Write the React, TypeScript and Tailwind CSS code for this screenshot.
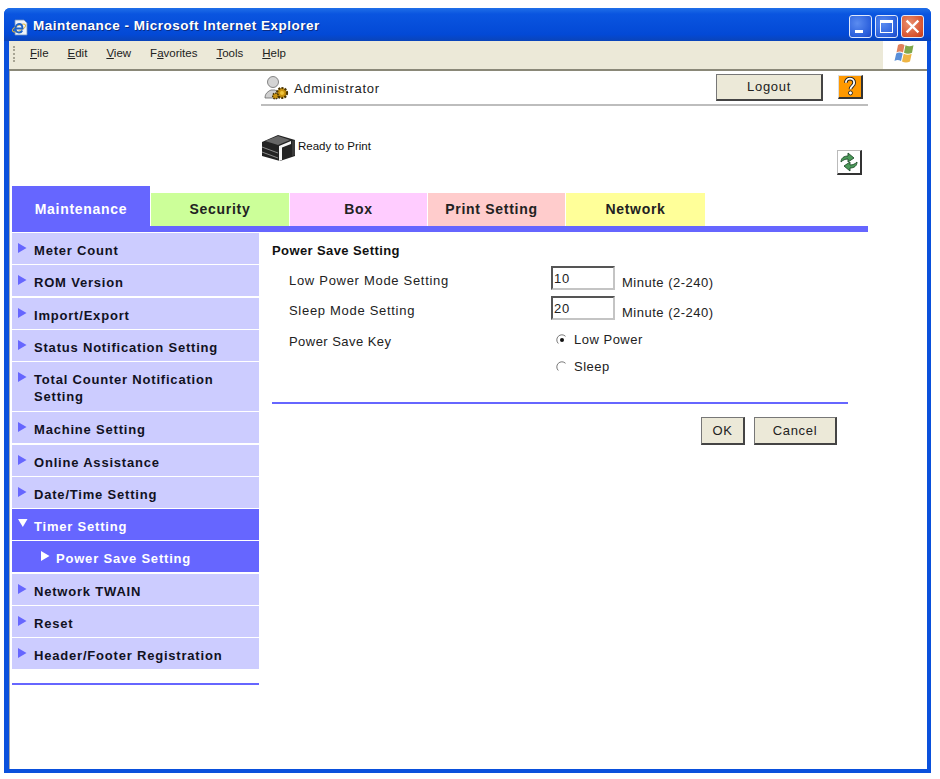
const arial = "font-['Liberation_Sans',Arial,sans-serif]"

type MenuItem = { label: string; indent?: boolean; active?: boolean; open?: boolean; tall?: boolean }

const menuItems: MenuItem[] = [
  { label: "Meter Count" },
  { label: "ROM Version" },
  { label: "Import/Export" },
  { label: "Status Notification Setting" },
  { label: "Total Counter Notification Setting", tall: true },
  { label: "Machine Setting" },
  { label: "Online Assistance" },
  { label: "Date/Time Setting" },
  { label: "Timer Setting", active: true, open: true },
  { label: "Power Save Setting", active: true, indent: true },
  { label: "Network TWAIN" },
  { label: "Reset" },
  { label: "Header/Footer Registration" },
]

const topMenus = [
  ["F", "ile"],
  ["E", "dit"],
  ["V", "iew"],
  ["Fa", "vorites"],
  ["T", "ools"],
  ["H", "elp"],
]

function IeIcon() {
  return (
    <svg width="18" height="18" viewBox="0 0 18 18" className="shrink-0">
      <path d="M4 2h9l3 3v12H4z" fill="#eef3fb" stroke="#6f8fc0" strokeWidth="0.8" />
      <ellipse cx="8" cy="10" rx="7" ry="2.6" transform="rotate(-25 8 10)" fill="none" stroke="#e5b93a" strokeWidth="1" />
      <path d="M4.5 10.5h7c0-3-1.5-4.5-3.5-4.5s-3.5 2-3.5 4.5 1.5 4 3.5 4c1.500 0 2.700-.7 3.300-2" fill="none" stroke="#1d63c7" strokeWidth="1.800" />
    </svg>
  )
}

function WinButton({ kind }: { kind: "min" | "max" | "close" }) {
  const bg =
    kind === "close"
      ? "bg-[radial-gradient(circle_at_35%_35%,#e9906f,#d8532f_70%,#c23a17)]"
      : "bg-[radial-gradient(circle_at_35%_35%,#5b8cf0,#2a5fdc_70%,#2048c4)]"
  return (
    <div className={`w-[23px] h-[23px] rounded-[3px] border border-[#dfe8fb] flex items-center justify-center ${bg}`}>
      {kind === "min" && <div className="w-[8px] h-[3px] bg-white mt-[10px] mr-[3px]" />}
      {kind === "max" && <div className="w-[13px] h-[13px] border border-white border-t-[3px]" />}
      {kind === "close" && (
        <svg width="15" height="15" viewBox="0 0 15 15">
          <path d="M2.500 2.500l10 10M12.500 2.500l-10 10" stroke="#fff" strokeWidth="2.400" strokeLinecap="square" />
        </svg>
      )}
    </div>
  )
}

function WinFlag() {
  return (
    <svg width="24" height="22" viewBox="0 0 24 22">
      <path d="M5 3c2-1.300 4-1.300 6.500 0L10 10.500C7.800 9.300 5.500 9.300 3.500 10.500z" fill="#e0805a" />
      <path d="M12.500 3.300c2.500 1.200 5 1.200 8 0L19 10.800c-2.700 1.200-5.200 1.200-8 0z" fill="#7fa84a" />
      <path d="M3.200 11.500c2-1.200 4.300-1.200 6.500 0L8 19c-2.200-1.200-4.500-1.200-6.500 0z" fill="#5a8fd8" />
      <path d="M10.700 11.800c2.800 1.200 5.300 1.200 8 0L17 19.500c-2.700 1.200-5.300 1.200-8 0z" fill="#eeb544" />
    </svg>
  )
}

function AdminIcon() {
  return (
    <svg width="26" height="26" viewBox="0 0 26 26" className="shrink-0">
      <circle cx="10" cy="7" r="5.500" fill="#d4d4d4" stroke="#6a6a6a" strokeWidth="0.800" />
      <path d="M2 23c0-3 1-5 4-7l2-1h4l3 2 2 6z" fill="#cfcfcf" stroke="#6a6a6a" strokeWidth="0.800" />
      <circle cx="19" cy="18" r="5" fill="#c9920f" stroke="#4a3504" strokeWidth="2.200" strokeDasharray="2 1.200" />
      <circle cx="19" cy="18" r="2" fill="#f0c63c" />
      <circle cx="12.500" cy="21" r="2.800" fill="#c9920f" stroke="#4a3504" strokeWidth="1.500" strokeDasharray="1.500 1" />
    </svg>
  )
}

function PrinterIcon() {
  return (
    <svg width="35" height="29" viewBox="0 0 35 29" className="shrink-0">
      <path d="M1 9L17 2l17 5v16l-15 5L1 23z" fill="#222" />
      <path d="M4 8l13-5 12 4-12 5z" fill="#666" />
      <path d="M1 14l16 6M1 19l16 6" stroke="#8a8a8a" strokeWidth="1" />
      <path d="M18 13l12-5v3l-9 3.500V27l-3 1z" fill="#f5f5f5" />
      <path d="M31 8l3-1v15l-3 1z" fill="#3a3a3a" />
    </svg>
  )
}

function HelpIcon() {
  return (
    <div className="w-[25px] h-[24px] bg-[#ff9900] border border-[#ddd] border-r-2 border-b-2 border-r-[#333] border-b-[#333] flex items-center justify-center">
      <svg width="12" height="19" viewBox="0 0 13 20">
        <path d="M2 6c0-6 9-6 9 0 0 3.500-4 3.500-4 7" fill="none" stroke="#222" strokeWidth="4" />
        <path d="M2 6c0-6 9-6 9 0 0 3.500-4 3.500-4 7" fill="none" stroke="#fff" strokeWidth="2" />
        <circle cx="7" cy="17" r="2.200" fill="#fff" stroke="#222" strokeWidth="1" />
      </svg>
    </div>
  )
}

function RefreshIcon() {
  return (
    <div className="w-[25px] h-[25px] bg-white border border-[#bbb] border-r-2 border-b-2 border-r-[#333] border-b-[#333] flex items-center justify-center">
      <svg width="20" height="20" viewBox="0 0 20 20">
        <path d="M2 10c0-4 3-6 7-6V1l6 5-6 4V7c-3 0-5 1-7 3z" fill="#4c9a5a" stroke="#1f4d2a" strokeWidth="0.900" />
        <path d="M18 10c0 4-3 6-7 6v3l-6-5 6-4v3c3 0 5-1 7-3z" fill="#4c9a5a" stroke="#1f4d2a" strokeWidth="0.900" />
      </svg>
    </div>
  )
}

function Radio({ checked }: { checked?: boolean }) {
  return (
    <svg width="12" height="12" viewBox="0 0 12 12" className="shrink-0">
      <circle cx="6" cy="6" r="5.500" fill="#fff" />
      <path d="M9.500 2.300A5 5 0 0 0 2.300 9.500" fill="none" stroke="#777" strokeWidth="1" />
      {checked && <circle cx="6" cy="6" r="2" fill="#111" />}
    </svg>
  )
}

function Tab({ label, className }: { label: string; className: string }) {
  return <div className={`flex items-center justify-center font-bold tracking-[0.7px] text-[14px] ${className}`}>{label}</div>
}

function SideItem({ item }: { item: MenuItem }) {
  const colors = item.active ? "bg-[#6666ff] text-white" : "bg-[#ccccff] text-[#111122]"
  return (
    <div className={`flex pt-[9px] ${item.tall ? "h-[49px]" : "h-[31px]"} ${item.indent ? "pl-[29px]" : "pl-[6px]"} ${colors}`}>
      <span className={`${item.indent ? "w-[15px]" : "w-[16px]"} shrink-0 pt-[1px]`}>
        {item.open ? (
          <svg width="10" height="9" viewBox="0 0 10 9">
            <path d="M0 0h9.500L4.800 8z" fill="#fff" />
          </svg>
        ) : (
          <svg width="9" height="10" viewBox="0 0 9 10">
            <path d="M0 0l8.500 5L0 10z" fill={item.active ? "#fff" : "#6666ff"} />
          </svg>
        )}
      </span>
      <span className="font-bold text-[13px] leading-[17px] tracking-[0.8px] w-[205px]">{item.label}</span>
    </div>
  )
}

function XpButton({ label, className }: { label: string; className: string }) {
  return (
    <button className={`bg-[#ece9d8] border border-[#777] border-r-2 border-b-2 border-r-[#444] border-b-[#444] text-[13px] tracking-[0.7px] text-[#222] ${className}`}>
      {label}
    </button>
  )
}

function MinuteField({ value }: { value: string }) {
  return (
    <div className="flex items-center h-[24px]">
      <input
        readOnly
        value={value}
        className="w-[64px] h-[24px] bg-white border-2 border-t-[#555] border-l-[#555] border-r-[#c4c4c4] border-b-[#c4c4c4] pl-[1px] text-[13px] text-[#222] outline-none"
      />
      <span className="ml-[7px] mt-[10px] text-[13px] tracking-[0.5px] text-[#222]">Minute (2-240)</span>
    </div>
  )
}

export default function App() {
  return (
    <div className={`w-[940px] h-[779px] bg-white pt-[8px] pl-[4px] ${arial}`}>
      <div className="w-[927px] h-[765px] flex flex-col rounded-t-[6px] bg-[#0a50dc] pl-[5px] pr-[4px] pb-[4px]">
        <div className="h-[33px] -ml-[5px] -mr-[4px] shrink-0 rounded-t-[6px] bg-[linear-gradient(#1f6fe8,#0a55e0_18%,#0349d6_80%,#0a44b8)] flex items-center pl-[7px] pr-[7px] pt-[4px]">
          <IeIcon />
          <span className="ml-[4px] text-white font-bold text-[13.5px] tracking-[0.5px] [text-shadow:1px_1px_0_#0a2a80]">
            Maintenance - Microsoft Internet Explorer
          </span>
          <div className="ml-auto flex gap-[3px]">
            <WinButton kind="min" />
            <WinButton kind="max" />
            <WinButton kind="close" />
          </div>
        </div>

        <div className="h-[30px] shrink-0 flex bg-[#ece9d8] border-b-2 border-[#8a8878]">
          <div className="flex-1 flex items-center pl-[4px] pb-[3px] text-[11.5px] text-[#222]">
            <div className="w-[2px] h-[16px] mr-[15px] border-l-2 border-dotted border-[#a8a594]" />
            <div className="flex gap-[19px]">
              {topMenus.map(([key, rest]) => (
                <span key={rest}>
                  {key.length > 1 ? key[0] : ""}
                  <span className="underline">{key.length > 1 ? key[1] : key}</span>
                  {rest}
                </span>
              ))}
            </div>
          </div>
          <div className="w-[44px] bg-white flex justify-center pt-[1px]">
            <WinFlag />
          </div>
        </div>

        <div className="flex-1 bg-white border-l border-[#aaaaaa] pl-[2px] flex flex-col text-[#222]">
          <div className="ml-[249px] w-[607px]">
            <div className="h-[35px] flex border-b-2 border-[#bdbdbd] pl-[2px]">
              <div className="flex items-center h-[33px]">
                <AdminIcon />
                <span className="ml-[5px] mt-[2px] text-[13px] tracking-[0.7px]">Administrator</span>
              </div>
              <XpButton label="Logout" className="ml-auto mt-[3px] w-[107px] h-[27px]" />
              <div className="ml-[15px] mr-[5px] mt-[4px]">
                <HelpIcon />
              </div>
            </div>
            <div className="h-[80px] flex">
              <div className="mt-[26px] h-[30px] flex items-center">
                <PrinterIcon />
                <span className="ml-[2px] text-[11.5px] text-[#111]">Ready to Print</span>
              </div>
              <div className="ml-auto mr-[6px] mt-[44px]">
                <RefreshIcon />
              </div>
            </div>
          </div>

          <div className="h-[40px] flex items-end">
            <Tab label="Maintenance" className="w-[138px] h-[40px] mr-[1px] pt-[7px] bg-[#6666ff] text-white" />
            <Tab label="Security" className="w-[138px] h-[33px] mr-[1px] bg-[#ccff99] text-[#222]" />
            <Tab label="Box" className="w-[137px] h-[33px] mr-[1px] bg-[#ffccff] text-[#222]" />
            <Tab label="Print Setting" className="w-[137px] h-[33px] mr-[1px] pr-[10px] bg-[#ffcccc] text-[#222]" />
            <Tab label="Network" className="w-[139px] h-[33px] bg-[#ffff99] text-[#222]" />
          </div>
          <div className="w-[856px] h-[6px] bg-[#6666ff]" />

          <div className="flex mt-[1px]">
            <div className="w-[247px] shrink-0">
              <div className="flex flex-col gap-[1.25px]">
                {menuItems.map((item) => (
                  <SideItem key={item.label} item={item} />
                ))}
              </div>
              <div className="h-[2px] bg-[#6666ff] mt-[14px]" />
            </div>

            <div className="ml-[13px] w-[576px]">
              <h2 className="mt-[9px] font-bold text-[13px] leading-[17px] tracking-[0.4px] text-[#111]">Power Save Setting</h2>
              <div className="mt-[7px] pl-[17px] grid grid-cols-[262px_1fr] gap-y-[6px] text-[13px] tracking-[0.7px]">
                <span className="h-[24px] leading-[30px]">Low Power Mode Setting</span>
                <MinuteField value="10" />
                <span className="h-[24px] leading-[30px]">Sleep Mode Setting</span>
                <MinuteField value="20" />
                <span className="mt-[5px] h-[20px] leading-[22px] tracking-[0.45px]">Power Save Key</span>
                <div className="mt-[4px] flex flex-col gap-[7px] pl-[5px] tracking-[0.5px]">
                  <label className="flex items-center gap-[6px] h-[20px]">
                    <Radio checked />
                    Low Power
                  </label>
                  <label className="flex items-center gap-[6px] h-[20px]">
                    <Radio />
                    Sleep
                  </label>
                </div>
              </div>
              <div className="mt-[25px] h-[2px] bg-[#6666ff]" />
              <div className="mt-[13px] flex justify-end gap-[9px] pr-[11px]">
                <XpButton label="OK" className="w-[44px] h-[28px]" />
                <XpButton label="Cancel" className="w-[83px] h-[28px]" />
              </div>
            </div>
          </div>
        </div>
      </div>
    </div>
  )
}
